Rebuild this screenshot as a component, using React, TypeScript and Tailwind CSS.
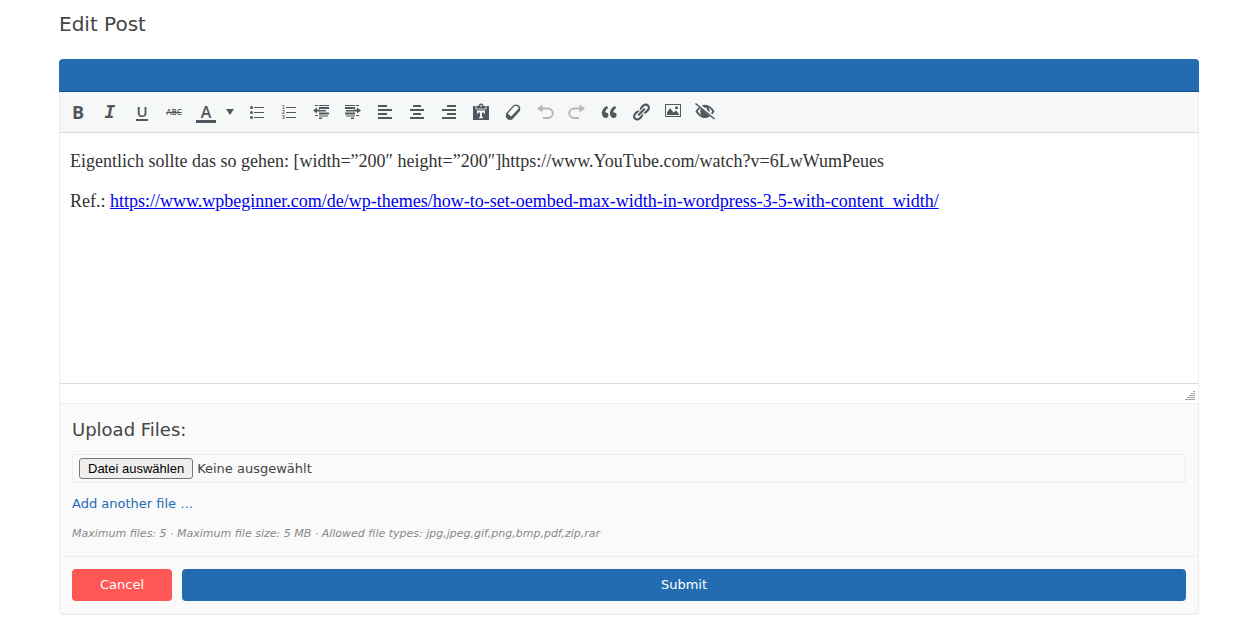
import React, { useState } from 'react';

const verdana = "font-['DejaVu_Sans',Verdana,sans-serif]";

type ToolProps = {
  label: string;
  disabled?: boolean;
  children: React.ReactNode;
};

function Tool({ label, disabled, children }: ToolProps) {
  return (
    <button
      type="button"
      title={label}
      aria-label={label}
      disabled={disabled}
      className="flex h-8 w-8 shrink-0 items-center justify-center text-[#50575e] disabled:text-[#b4b7ba]"
    >
      {children}
    </button>
  );
}

function Icon({ children }: { children: React.ReactNode }) {
  return (
    <svg viewBox="0 0 20 20" className="h-5 w-5" fill="currentColor" aria-hidden="true">
      {children}
    </svg>
  );
}

const letter = "[font-family:'Open_Sans',sans-serif]";

function Toolbar() {
  return (
    <div role="toolbar" aria-label="Formatting" className="flex h-10 flex-nowrap items-center border-x border-[#eee] bg-[#f6f7f7] px-[2px]">
      <Tool label="Bold">
        <span className={`${letter} text-[18px] leading-5 font-bold`}>B</span>
      </Tool>
      <Tool label="Italic">
        <span className="font-['DejaVu_Sans_Mono',monospace] text-[18px] leading-5 font-bold italic">I</span>
      </Tool>
      <Tool label="Underline">
        <span className={`${letter} border-b-2 border-current text-[15px] leading-[15px] font-semibold`}>U</span>
      </Tool>
      <Tool label="Strikethrough">
        <span className={`${letter} text-[8px] leading-5 font-semibold line-through`}>ABC</span>
      </Tool>
      <Tool label="Text color">
        <span className={`${letter} mt-1 w-5 border-b-3 border-current text-center text-[16px] leading-[15px] font-semibold`}>A</span>
      </Tool>
      <button type="button" aria-label="More colors" className="mr-1 flex h-8 w-[15px] items-center justify-center text-[#50575e]">
        <svg viewBox="0 0 8 6" className="h-[6px] w-2" fill="currentColor" aria-hidden="true">
          <path d="M0 0h8L4 6z" />
        </svg>
      </button>
      <Tool label="Bulleted list">
        <Icon>
          <circle cx="4.500" cy="5.500" r="1.500" />
          <circle cx="4.500" cy="10.500" r="1.500" />
          <circle cx="4.500" cy="15.500" r="1.500" />
          <path d="M7 5h10v1H7zM7 10h10v1H7zM7 15h10v1H7z" />
        </Icon>
      </Tool>
      <Tool label="Numbered list">
        <Icon>
          <g className="font-['Liberation_Sans',sans-serif]" fontSize="5" fontWeight="700">
            <text x="3" y="7">1</text>
            <text x="3" y="12">2</text>
            <text x="3" y="17">3</text>
          </g>
          <path d="M7 5h10v1H7zM7 10h10v1H7zM7 15h10v1H7z" />
        </Icon>
      </Tool>
      <Tool label="Decrease indent">
        <Icon>
          <path d="M4 3h3v1H4zM8 3h10v1H8zM8 5h10v2H8zM8 8h7v1.500H8zM8 10.500h10v2H8zM4 13h3v1H4zM8 13.500h9v1H8zM8 15.500h3v1.500H8z" />
          <path d="M2 8.500L6 5.500V7.500h3v2H6v2z" />
        </Icon>
      </Tool>
      <Tool label="Increase indent">
        <Icon>
          <path d="M2 3h10v1H2zM13 3h3v1h-3zM2 5h10v2H2zM3 8h8v1.500H3zM2 10.500h10v2H2zM3 13.500h9v1H3zM13 13h3v1h-3zM8 15.500h3v1.500H8z" />
          <path d="M18 8.500l-4-3v2h-3v2h3v2z" />
        </Icon>
      </Tool>
      <Tool label="Align left">
        <Icon>
          <path d="M3 3h9v2H3zM3 7h14v2H3zM3 11h9v2H3zM3 15h14v2H3z" />
        </Icon>
      </Tool>
      <Tool label="Align center">
        <Icon>
          <path d="M6 3h8v2H6zM3 7h14v2H3zM6 11h8v2H6zM3 15h14v2H3z" />
        </Icon>
      </Tool>
      <Tool label="Align right">
        <Icon>
          <path d="M8 3h9v2H8zM3 7h14v2H3zM8 11h9v2H8zM3 15h14v2H3z" />
        </Icon>
      </Tool>
      <Tool label="Paste as text">
        <Icon>
          <path fillRule="evenodd" d="M2 4h16v14H2zM6 8.500v3h1.500V10.500H9V15H8v1.200h4V15h-1v-4.500h1.500v1H14v-3z" />
          <path d="M5 3.500h2.500a2.500 2.500 0 0 1 5 0H15V7H5z" stroke="#f6f7f7" strokeWidth=".8" />
          <circle cx="10" cy="3.800" r=".9" fill="#f6f7f7" />
        </Icon>
      </Tool>
      <Tool label="Clear formatting">
        <Icon>
          <path
            fillRule="evenodd"
            d="M11 2.700h4L17.200 5.200v3.300L9 17.700H5L3 15.200v-3.700zM11.500 4L4.700 11.700l3.500 2.900L15.900 6.200 14.300 4z"
          />
        </Icon>
      </Tool>
      <Tool label="Undo" disabled>
        <Icon>
          <path d="M2 6.500L7.500 2.500v3H13a5 5 0 0 1 0 11.500H8v-2h5a3.500 3.500 0 0 0 0-7.500H7.500v3z" />
        </Icon>
      </Tool>
      <Tool label="Redo" disabled>
        <Icon>
          <path d="M18 6.500L12.500 2.500v3H7a5 5 0 0 0 0 11.500h5v-2H7a3.500 3.500 0 0 1 0-7.500h5.500v3z" />
        </Icon>
      </Tool>
      <Tool label="Blockquote">
        <Icon>
          <path d="M9.490 13.220c0-.74-.2-1.380-.61-1.900-.62-.78-1.830-.88-2.530-.72-.29-1.650 1.110-3.750 2.920-4.650L7.880 4c-2.730 1.300-5.420 4.280-4.960 8.050C3.210 14.430 4.590 16 6.540 16c.85 0 1.560-.25 2.120-.75s.83-1.180.83-2.030zm8.050 0c0-.74-.2-1.380-.61-1.900-.63-.78-1.830-.88-2.530-.72-.29-1.650 1.110-3.750 2.920-4.650L15.930 4c-2.730 1.300-5.410 4.280-4.950 8.050.28 2.380 1.660 3.950 3.610 3.950.85 0 1.560-.25 2.120-.75s.83-1.180.83-2.030z" />
        </Icon>
      </Tool>
      <Tool label="Insert link">
        <Icon>
          <path d="M17.740 2.760c1.680 1.690 1.680 4.410 0 6.100l-1.530 1.520c-1.120 1.120-2.700 1.470-4.140 1.090l2.620-2.610.76-.77.76-.76c.84-.84.84-2.200 0-3.040-.84-.85-2.200-.85-3.040 0l-.77.76-3.380 3.380c-.37-1.440-.02-3.020 1.100-4.140l1.520-1.530c1.690-1.680 4.420-1.680 6.100 0zM8.590 13.430l5.340-5.340c.42-.42.42-1.100 0-1.520-.44-.43-1.130-.39-1.530 0l-5.330 5.340c-.42.42-.42 1.100 0 1.520.44.43 1.130.39 1.520 0zm-.76 2.290l4.140-4.150c.38 1.440.03 3.020-1.090 4.140l-1.520 1.530c-1.690 1.680-4.410 1.680-6.100 0-1.680-1.680-1.680-4.420 0-6.100l1.530-1.520c1.120-1.120 2.700-1.470 4.140-1.100l-4.140 4.150c-.85.84-.85 2.200 0 3.050.84.84 2.200.84 3.040 0z" />
        </Icon>
      </Tool>
      <Tool label="Insert image">
        <Icon>
          <path fillRule="evenodd" d="M2 2h16v13H2zM3 3v11h14V3z" />
          <path d="M4 13V10.500L7 6l3.500 4.500L13 8.500l3 3.500v1z" />
          <circle cx="13.500" cy="5.700" r="1.500" />
        </Icon>
      </Tool>
      <Tool label="Hide toolbar">
        <Icon>
          <path fillRule="evenodd" d="M.5 9.200C3 5 6.300 2.800 10 2.800s7 2.200 9.500 6.400c-2.500 4.300-5.800 6.800-9.500 6.800S3 13.500.5 9.200zM2.800 9.200c1 1.800 2.300 3 3.800 3.800a5.500 5.500 0 0 1 0-7.400C5.100 6.300 3.800 7.400 2.800 9.200zM17.200 9.200c-1-1.800-2.300-2.900-3.800-3.600a5.500 5.500 0 0 1 0 7.400c1.500-.8 2.800-2 3.800-3.800zM10.300 5.500a1.500 1.500 0 0 0 0 3c1 0 1.700-.7 1.700-1.500s-.7-1.500-1.700-1.500z" />
          <path d="M1.500 1L19.500 16" stroke="#f6f7f7" strokeWidth="3" />
          <path d="M.5 1.500L19.500 17" stroke="currentColor" strokeWidth="1.600" />
        </Icon>
      </Tool>
    </div>
  );
}

function UploadRow({ id }: { id: string }) {
  return (
    <div className="mb-2 flex h-[29px] items-center border border-[#eee] px-[6px]">
      <input id={id} type="file" className="peer sr-only" />
      <label
        htmlFor={id}
        className="flex h-[21px] items-center rounded-[3px] border border-[#767676] bg-[#efefef] px-2 font-['Liberation_Sans',Arial,sans-serif] text-[13px] text-black peer-focus-visible:outline-2"
      >
        Datei auswählen
      </label>
      <span className="ml-1 text-[13px]">Keine ausgewählt</span>
    </div>
  );
}

export default function App() {
  const [files, setFiles] = useState(1);

  return (
    <main className={`${verdana} bg-white pr-[42px] pl-[59px] text-[#444]`}>
      <h1 className="pt-[9px] pb-5 text-[20px] leading-[30px]">Edit Post</h1>

      <form onSubmit={(e) => e.preventDefault()}>
        <div className="h-[33px] rounded-t border-b border-[#0f4c8a] bg-[#246cb1]" />
        <Toolbar />

        <div
          role="textbox"
          aria-multiline="true"
          aria-label="Post content"
          contentEditable
          suppressContentEditableWarning
          className="min-h-[252px] border border-x-[#eee] border-y-[#dadcde] bg-white px-[10px] pt-4 font-['Liberation_Serif',Georgia,serif] text-[18px] leading-6 text-[#333] outline-none"
        >
          <p className="mb-4">
            Eigentlich sollte das so gehen: [width=”200″ height=”200″]https://www.YouTube.com/watch?v=6LwWumPeues
          </p>
          <p>
            Ref.:{' '}
            <a
              href="https://www.wpbeginner.com/de/wp-themes/how-to-set-oembed-max-width-in-wordpress-3-5-with-content_width/"
              className="text-[#0000ee] underline"
            >
              https://www.wpbeginner.com/de/wp-themes/how-to-set-oembed-max-width-in-wordpress-3-5-with-content_width/
            </a>
          </p>
        </div>

        <div className="flex h-[19px] items-end justify-end border-x border-[#eee] pr-[3px] pb-[3px]">
          <svg viewBox="0 0 10 9" className="h-[9px] w-[10px]" stroke="#a0a4a8" aria-hidden="true">
            <path d="M8 .5h2M6 2.500h4M4 4.500h6M2 6.500h8M0 8.500h10" />
          </svg>
        </div>

        <div className="rounded-b border border-b-2 border-[#eee] bg-[#fafafa]">
          <div className="px-3 pt-3 pb-3">
            <h2 className="mb-[10px] text-[18px] leading-7">Upload Files:</h2>
            {Array.from({ length: files }, (_, i) => (
              <UploadRow key={i} id={`upload-${i}`} />
            ))}
            <a
              href="#add"
              onClick={() => setFiles(Math.min(files + 1, 5))}
              className="text-[13px] leading-6 text-[#246cb1]"
            >
              Add another file …
            </a>
            <p className="mt-2 text-[11px] leading-5 text-[#888] italic">
              Maximum files: 5 · Maximum file size: 5 MB · Allowed file types: jpg,jpeg,gif,png,bmp,pdf,zip,rar
            </p>
          </div>

          <div className="flex gap-[10px] border-t border-[#eee] p-3 text-[13px] text-white">
            <button type="button" className="h-8 w-[100px] rounded bg-[#ff5656]">
              Cancel
            </button>
            <button type="submit" className="h-8 flex-1 rounded bg-[#246cb1]">
              Submit
            </button>
          </div>
        </div>
      </form>
    </main>
  );
}
